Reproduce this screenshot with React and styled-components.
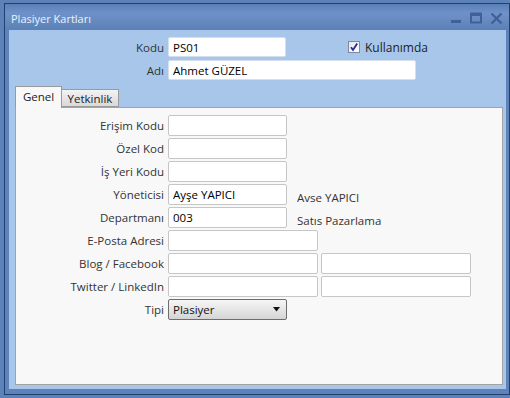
import React from "react";
import styled, { createGlobalStyle } from "styled-components";

const GlobalStyle = createGlobalStyle`
  html, body { margin: 0; padding: 0; background: #5c82b9; }
  body { font-family: "Open Sans", "Noto Sans", sans-serif; font-size: 11.5px; }
  * { box-sizing: border-box; }
`;

const Window = styled.div`
  width: 510px;
  height: 398px;
  padding: 3px 0 3px 4px;
  background: #5c82b9;
`;

const Frame = styled.div`
  height: 100%;
  border: 1px solid #21406f;
  display: flex;
  flex-direction: column;
  padding: 0 3px 5px 4px;
  background: #5d83ba;
`;

const TitleBar = styled.div`
  height: 26px;
  display: flex;
  align-items: center;
  padding: 2px 2px 0 6px;
  margin: 0 -3px 0 -4px;
  background: linear-gradient(#5a80b7 0%, #6e92c8 35%, #6489bf 70%, #5a80b7 100%);
`;

const Title = styled.span`
  color: #eaf2fc;
  font-size: 11px;
`;

const Controls = styled.div`
  margin-left: auto;
  display: flex;
  align-items: center;
  gap: 8px;
  padding-right: 4px;
`;

const Content = styled.div`
  flex: 1;
  background: #a7c6ea;
  display: flex;
  flex-direction: column;
  padding: 7px 3px 4px 6px;
`;

const HeaderGrid = styled.div`
  display: grid;
  grid-template-columns: 149px auto;
  column-gap: 4px;
  row-gap: 3px;
  align-items: center;
`;

const Label = styled.div`
  text-align: right;
  color: #333;
  white-space: nowrap;
`;

const Field = styled.input`
  width: ${(p) => p.$w}px;
  height: ${(p) => p.$h || 21}px;
  border: 1px solid ${(p) => (p.$onBlue ? "#d5e0ee" : "#c6c6c6")};
  border-radius: 2px;
  background: #fff;
  padding: 0 4px;
  font: inherit;
  color: #000;
  outline: none;
  display: block;
`;

const Inline = styled.div`
  display: flex;
  align-items: center;
  gap: ${(p) => p.$gap || 3}px;
`;

const CheckWrap = styled.label`
  display: flex;
  align-items: center;
  gap: 5px;
  margin-left: 59px;
  color: #1e1e1e;
  font-size: 12px;
`;

const Tabs = styled.div`
  margin-top: 6px;
  display: flex;
  align-items: flex-end;
  height: 21px;
  position: relative;
  z-index: 1;
`;

const Tab = styled.div`
  height: ${(p) => (p.$active ? 22 : 18)}px;
  width: ${(p) => p.$w}px;
  border: 1px solid #9a9a9a;
  border-bottom: ${(p) => (p.$active ? "none" : "1px solid #9a9a9a")};
  border-left: ${(p) => (p.$first ? "1px solid #9a9a9a" : "none")};
  background: ${(p) =>
    p.$active ? "#f8f8f8" : "linear-gradient(#f3f3f3, #d9d9d9)"};
  color: #222;
  display: flex;
  align-items: center;
  justify-content: center;
  padding-bottom: ${(p) => (p.$active ? 2 : 0)}px;
  margin-bottom: ${(p) => (p.$active ? -1 : 0)}px;
`;

const Panel = styled.div`
  flex: 1;
  border: 1px solid #a3a3a3;
  background: #f8f8f8;
  padding-top: 7px;
`;

const FormGrid = styled.div`
  display: grid;
  grid-template-columns: 148px auto;
  column-gap: 4px;
  row-gap: 2px;
  grid-auto-rows: 21px;
  align-items: center;
`;

const SideText = styled.div`
  align-self: flex-start;
  height: 11px;
  padding-top: 7px;
  box-sizing: content-box;
  overflow: hidden;
  line-height: 14px;
  margin-left: 7px;
  color: #333;
  white-space: nowrap;
`;

const Select = styled.div`
  width: 119px;
  height: 21px;
  border: 1px solid #6d6d6d;
  border-radius: 2px;
  background: linear-gradient(#f6f6f6, #e6e6e6 50%, #d4d4d4);
  display: flex;
  align-items: center;
  justify-content: space-between;
  padding: 0 6px 0 4px;
  color: #111;
`;

const CheckBox = () => (
  <svg width="12" height="12" viewBox="0 0 12 12">
    <defs>
      <linearGradient id="cbg" x1="0" y1="0" x2="1" y2="1">
        <stop offset="0" stopColor="#dfe4ee" />
        <stop offset="1" stopColor="#ffffff" />
      </linearGradient>
    </defs>
    <rect x="0.5" y="0.5" width="11" height="11" fill="url(#cbg)" stroke="#7d8aa3" />
    <path d="M3 6.2 L5 9 L9.2 2.6" fill="none" stroke="#2b2a8c" strokeWidth="1.8" />
  </svg>
);

const MinIcon = () => (
  <svg width="11" height="12" viewBox="0 0 11 12">
    <rect x="0" y="8" width="10" height="3" fill="#3f609a" />
  </svg>
);
const MaxIcon = () => (
  <svg width="12" height="12" viewBox="0 0 12 12">
    <rect x="1" y="1.5" width="10" height="9" fill="none" stroke="#3f609a" strokeWidth="2" />
    <rect x="1" y="1" width="10" height="3" fill="#3f609a" />
  </svg>
);
const CloseIcon = () => (
  <svg width="13" height="13" viewBox="0 0 13 13">
    <path d="M1.5 1.5 L11.5 11.5 M11.5 1.5 L1.5 11.5" stroke="#3f609a" strokeWidth="2.4" />
  </svg>
);

const Arrow = () => (
  <svg width="7" height="5" viewBox="0 0 7 5">
    <path d="M0 0 H7 L3.5 4.5 Z" fill="#111" />
  </svg>
);

const rows = [
  { label: "Erişim Kodu", fields: [{ w: 119, v: "" }] },
  { label: "Özel Kod", fields: [{ w: 119, v: "" }] },
  { label: "İş Yeri Kodu", fields: [{ w: 119, v: "" }] },
  { label: "Yöneticisi", fields: [{ w: 119, v: "Ayşe YAPICI" }], side: "Ayşe YAPICI" },
  { label: "Departmanı", fields: [{ w: 119, v: "003" }], side: "Satış Pazarlama" },
  { label: "E-Posta Adresi", fields: [{ w: 150, v: "" }] },
  { label: "Blog / Facebook", fields: [{ w: 150, v: "" }, { w: 150, v: "" }] },
  { label: "Twitter / LinkedIn", fields: [{ w: 150, v: "" }, { w: 150, v: "" }] },
];

export default function App() {
  return (
    <>
      <GlobalStyle />
      <Window>
        <Frame>
          <TitleBar>
            <Title>Plasiyer Kartları</Title>
            <Controls>
              <MinIcon />
              <MaxIcon />
              <CloseIcon />
            </Controls>
          </TitleBar>
          <Content>
            <HeaderGrid>
              <Label>Kodu</Label>
              <Inline>
                <Field $w={118} $h={20} $onBlue readOnly value="PS01" />
                <CheckWrap>
                  <CheckBox />
                  Kullanımda
                </CheckWrap>
              </Inline>
              <Label>Adı</Label>
              <Field $w={248} $h={20} $onBlue readOnly value="Ahmet GÜZEL" />
            </HeaderGrid>
            <Tabs>
              <Tab $active $first $w={47}>Genel</Tab>
              <Tab $w={57}>Yetkinlik</Tab>
            </Tabs>
            <Panel>
              <FormGrid>
                {rows.map((r) => (
                  <React.Fragment key={r.label}>
                    <Label>{r.label}</Label>
                    <Inline>
                      {r.fields.map((f, i) => (
                        <Field key={i} $w={f.w} readOnly value={f.v} />
                      ))}
                      {r.side && <SideText>{r.side}</SideText>}
                    </Inline>
                  </React.Fragment>
                ))}
                <Label>Tipi</Label>
                <Inline>
                  <Select>
                    <span>Plasiyer</span>
                    <Arrow />
                  </Select>
                </Inline>
              </FormGrid>
            </Panel>
          </Content>
        </Frame>
      </Window>
    </>
  );
}
